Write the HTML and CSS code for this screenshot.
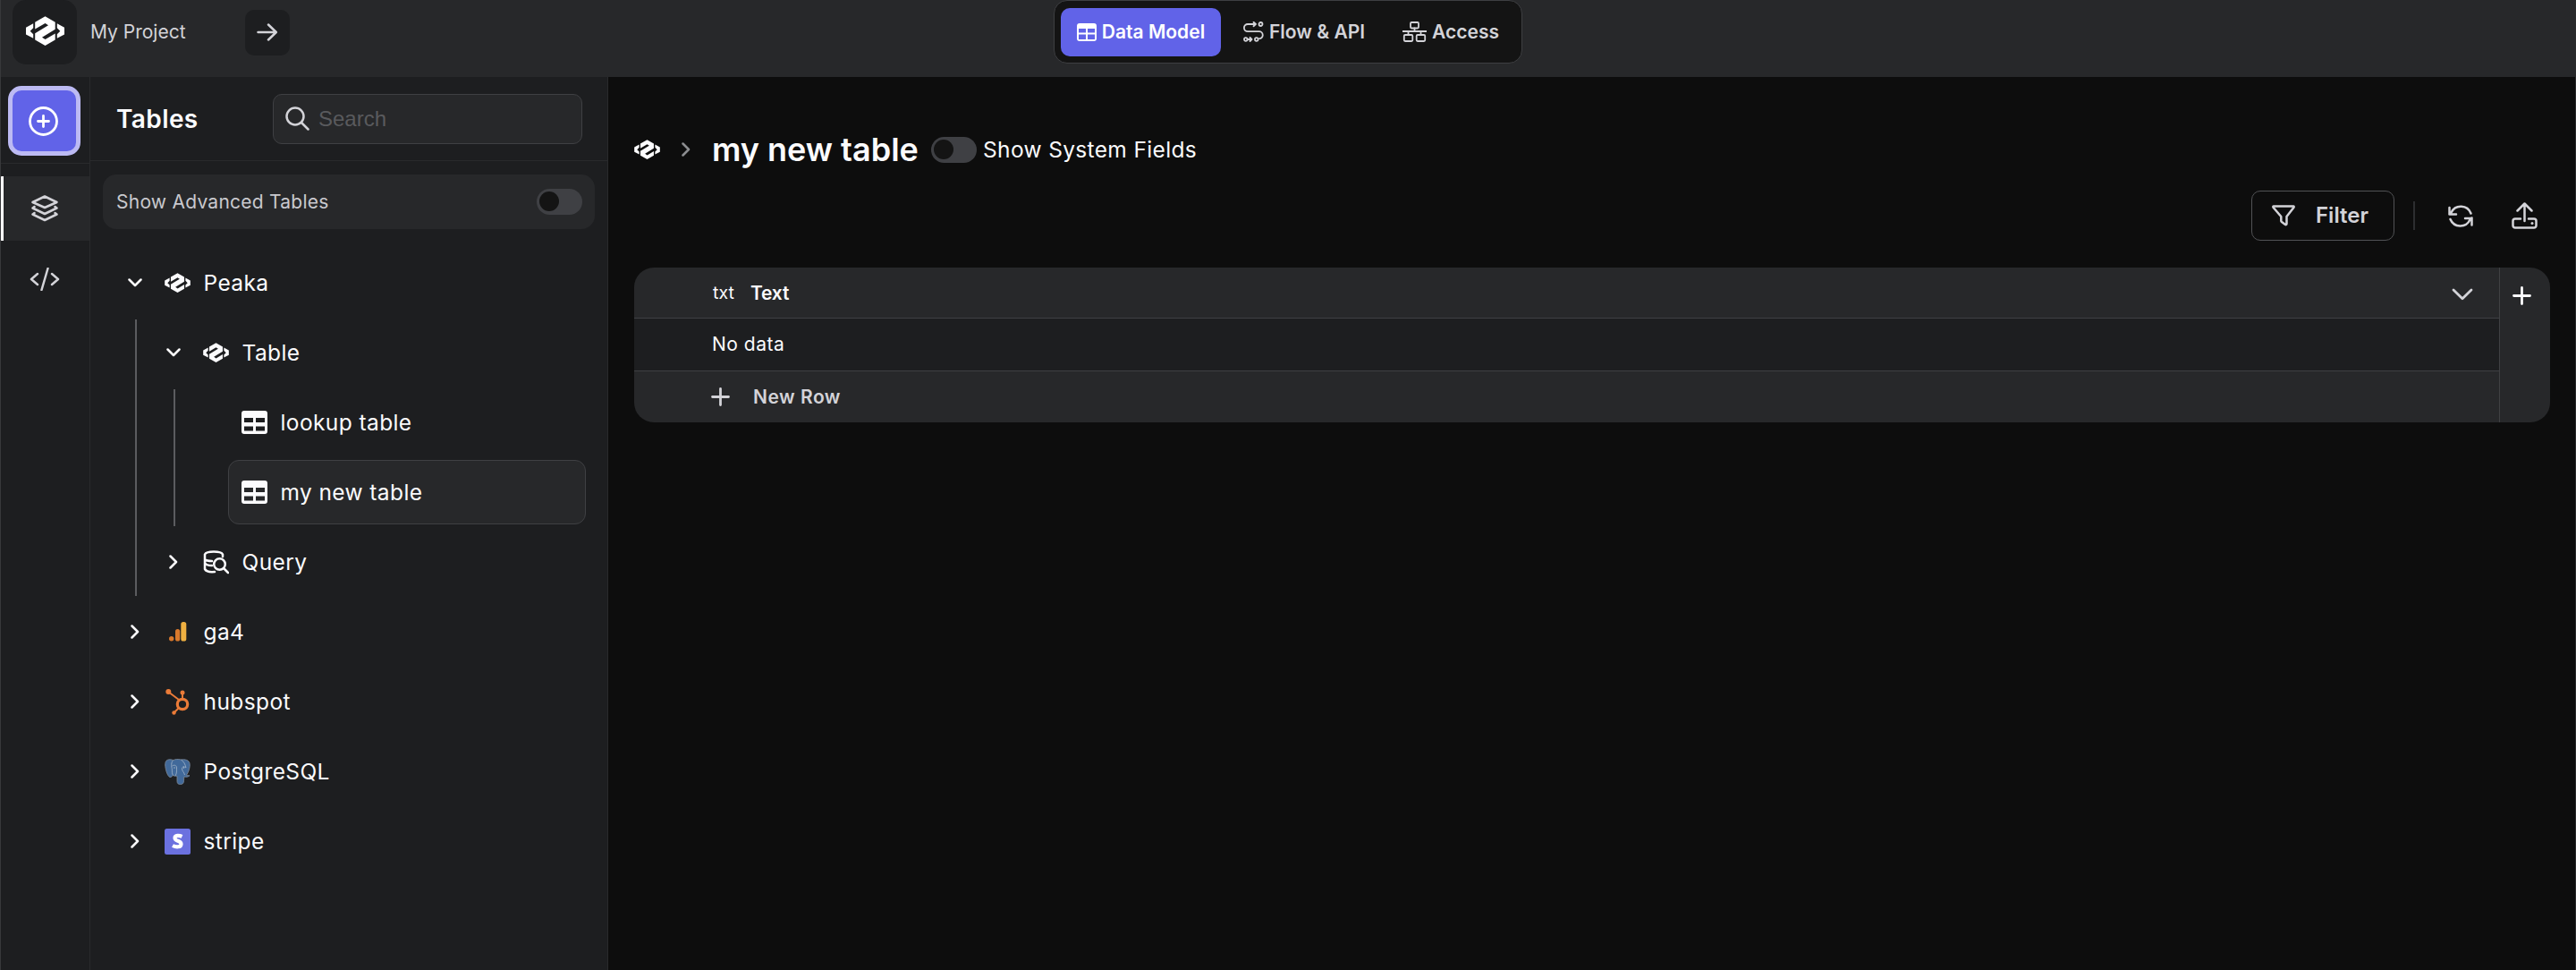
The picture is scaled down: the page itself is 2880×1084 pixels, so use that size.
FILE: index.html
```html
<!DOCTYPE html>
<html lang="en">
<head>
<meta charset="utf-8">
<title>My Project</title>
<link rel="stylesheet" href="styles.css">
</head>
<body>
<svg class="defs" width="0" height="0">
  <symbol id="logo" viewBox="0 0 43 33">
    <path d="M0 12.700 8.200 8.300v4.900L4.700 16.700l3.500 3.600v4.400L0 20.600zM43 12.700 34.800 8.300v4.900l3.500 3.500-3.500 3.600v4.400L43 20.600zM10.200 6.800 21.500.2 32.700 6.800v8L18 23.800l3.600 2.300 11.100-6.600v7L21.500 33 10.200 26.500v-7.300L25 10.200 21.500 8 10.200 14.500z"/>
  </symbol>
  <symbol id="down" viewBox="0 0 16 10"><path class="line" d="M1.500 1.500 8 8l6.500-6.500"/></symbol>
  <symbol id="right" viewBox="0 0 10 16"><path class="line" d="M1.500 1.500 8 8l-6.500 6.500"/></symbol>
  <symbol id="grid" viewBox="0 0 29 26">
    <path fill-rule="evenodd" d="M3 0h23a3 3 0 0 1 3 3v20a3 3 0 0 1-3 3H3a3 3 0 0 1-3-3V3a3 3 0 0 1 3-3zM3 8v5h10V8zM16 8v5h10V8zM3 17.500v5h10v-5zM16 17.500v5h10v-5z"/>
  </symbol>
  <symbol id="plus" viewBox="0 0 21 21"><path class="thick" d="M10.500 1.500v18M1.500 10.500h18"/></symbol>
</svg>

<header class="topbar">
  <div class="project">
    <div class="brand"><svg width="43" height="33"><use href="#logo"/></svg></div>
    <span class="project-name">My Project</span>
    <div class="go"><svg width="24" height="20" viewBox="0 0 24 20"><path class="line" d="M1.500 10h20M13 1.500 21.800 10 13 18.500"/></svg></div>
  </div>
  <nav class="tabs">
    <div class="tab active">
      <svg width="22" height="20" viewBox="0 0 22 20"><path fill-rule="evenodd" d="M3 0h16a3 3 0 0 1 3 3v14a3 3 0 0 1-3 3H3a3 3 0 0 1-3-3V3a3 3 0 0 1 3-3zM2 6v4.500h8V6zM12 6v4.500h8V6zM2 12.500V18h8v-5.500zM12 12.500V18h8v-5.500z"/></svg>
      <span>Data Model</span>
    </div>
    <div class="tab flow">
      <svg width="23" height="23" viewBox="0 0 23 23"><g class="fine"><path d="M14 3H5a4 4 0 0 0 0 8.200h12.500a4 4 0 0 1 .5 8M11.500.8 14 3l-2.500 2.200M4.500 20H9M7.500 18l2 2-2 2"/><circle cx="19.500" cy="3" r="2"/><circle cx="2.800" cy="20" r="1.800"/><circle cx="14.800" cy="20" r="1.800"/></g></svg>
      <span>Flow &amp; API</span>
    </div>
    <div class="tab access">
      <svg width="27" height="23" viewBox="0 0 27 23"><g class="fine"><rect x="9" y="1" width="9" height="6.500" rx="1.200"/><path d="M0 11h27M13.500 7.500V11M6.500 11v4M20.500 11v4"/><rect x="1.800" y="15" width="9.500" height="7" rx="1.200"/><rect x="15.700" y="15" width="9.500" height="7" rx="1.200"/></g></svg>
      <span>Access</span>
    </div>
  </nav>
  <div class="topbar-end"></div>
</header>

<div class="workspace">
  <aside class="rail">
    <div class="rail-add"><div class="add"><svg width="33" height="33" viewBox="0 0 33 33"><g class="thick"><circle cx="16.500" cy="16.500" r="15"/><path d="M16.500 10.500v12M10.500 16.500h12"/></g></svg></div></div>
    <div class="rail-item active"><svg width="30" height="30" viewBox="0 0 30 30"><g class="line"><path d="M15 1.500 28.500 8 15 14 1.500 8zM3.500 13l-2 1.500L15 21l13.500-6.500-2-1.500M3.500 20l-2 1.500L15 28l13.500-6.500-2-1.500"/></g></svg></div>
    <div class="rail-item"><svg width="34" height="26" viewBox="0 0 34 26"><path class="line" d="M9 7 2 13l7 6M25 7l7 6-7 6M20.500 1l-7 24"/></svg></div>
  </aside>

  <section class="panel">
    <div class="panel-head">
      <h2>Tables</h2>
      <div class="search"><svg width="27" height="27" viewBox="0 0 27 27"><g class="line"><circle cx="11" cy="11" r="9.500"/><path d="m18 18 7.500 7.500"/></g></svg><span>Search</span></div>
    </div>
    <div class="advanced"><span>Show Advanced Tables</span><i class="toggle"></i></div>
    <div class="tree">
      <div class="node"><svg class="caret" width="16" height="10"><use href="#down"/></svg><svg class="icon" width="29" height="22"><use href="#logo"/></svg><span>Peaka</span></div>
      <div class="branch">
        <div class="guide"></div>
        <div class="children">
          <div class="node"><svg class="caret" width="16" height="10"><use href="#down"/></svg><svg class="icon" width="29" height="22"><use href="#logo"/></svg><span>Table</span></div>
          <div class="branch">
            <div class="guide"></div>
            <div class="leaves">
              <div class="leaf"><svg width="29" height="26"><use href="#grid"/></svg><span>lookup table</span></div>
              <div class="leaf selected"><svg width="29" height="26"><use href="#grid"/></svg><span>my new table</span></div>
            </div>
          </div>
          <div class="node"><svg class="caret" width="10" height="16"><use href="#right"/></svg><svg class="icon" width="29" height="27" viewBox="0 0 29 27"><g class="line"><path d="M22 7V4.500C20 .5 4 .5 2 4.500V21c1.500 2.500 6 3.500 11 3M2 5v5c1.500 1.500 4 2 8 2M2 14c1 2 3 3 8 3"/><circle cx="18.500" cy="15.500" r="6.300"/><path d="m23.500 20.500 4.500 4.500"/></g></svg><span>Query</span></div>
        </div>
      </div>
      <div class="node"><svg class="caret" width="10" height="16"><use href="#right"/></svg><svg class="icon" width="29" height="22" viewBox="0 0 29 22"><circle cx="7.700" cy="18.800" r="2.700" fill="#d9792c"/><rect x="12" y="8" width="5.200" height="13.500" rx="2.600" fill="#d9792c"/><rect x="18.300" y="0" width="6" height="21.500" rx="2.600" fill="#efb041"/></svg><span>ga4</span></div>
      <div class="node"><svg class="caret" width="10" height="16"><use href="#right"/></svg><svg class="icon" width="29" height="29" viewBox="0 0 29 29"><g fill="none" stroke="#ea7b38" stroke-width="2"><circle cx="20" cy="17" r="5.700" stroke-width="3.200"/><path d="m4 3 12 9M20 4v7M16 21l-5 5"/></g><g fill="#ea7b38"><circle cx="4.300" cy="3" r="3"/><circle cx="20" cy="4" r="2.500"/><circle cx="10.500" cy="26.500" r="2.200"/></g></svg><span>hubspot</span></div>
      <div class="node"><svg class="caret" width="10" height="16"><use href="#right"/></svg><svg class="icon" width="29" height="29" viewBox="0 0 29 29"><path fill="#41699a" stroke="#7d8a99" stroke-width=".8" d="M6 .8C2 .8.600 3 .700 7c.1 4 2.300 12.500 5.300 13.500 1.200.3 2.300-.8 3.300-2 1.400 1 3 .8 4.700.8v6c.2 2.500 1.400 3.200 3.500 3.200 3 0 3.900-1.300 4-4l.3-4.500c2.700.5 4.700.3 6.200-1.300-1.500.2-2.700.1-3.500-.4 2.500-4 4.300-9 3.600-13C27.500 1.500 23 .2 18.500 1 15-.1 11.500.6 9.800 1.500 8.500 1 7.500.8 6 .8z"/><path fill="none" stroke="#a3b5c9" stroke-width=".8" d="M9.800 1.500c-3 2.500-2 7-1.500 10 .3 3-.3 5 1.200 7M8.500 8c2-1.500 5-1 5 2 0 4 .3 6-1.500 9M18.500 1c3 2 4.500 5 5.500 9-2-1.500-4.500-1.500-4.500 1 0 3 2.500 4 3 7M21.500 8.500V11M11 9v2"/></svg><span>PostgreSQL</span></div>
      <div class="node"><svg class="caret" width="10" height="16"><use href="#right"/></svg><svg class="icon" width="29" height="29" viewBox="0 0 29 29"><rect width="29" height="29" rx="2.500" fill="#6b71df"/><path fill="none" stroke="#fff" stroke-width="4.200" d="M19.500 8.800c-3-1.400-8-1.500-8 1.600 0 4 7 2.700 7 6.800 0 4-6 3.600-9.500 1.800"/></svg><span>stripe</span></div>
    </div>
  </section>

  <main class="content">
    <div class="crumbs">
      <svg class="logo" width="29" height="22"><use href="#logo"/></svg>
      <svg class="sep" width="10" height="16"><use href="#right"/></svg>
      <h1>my new table</h1>
      <i class="toggle"></i>
      <span>Show System Fields</span>
    </div>
    <div class="actions">
      <div class="filter"><svg width="26" height="24" viewBox="0 0 26 24"><path class="line" d="M2 1.500h22c.7 0 .8.700.5 1.200L16.500 13v8c0 1-.8 1.400-1.500 1l-4-3c-.5-.4-.7-.7-.7-1.300V13L1.500 2.700C1.200 2.200 1.300 1.500 2 1.500z"/></svg><span>Filter</span></div>
      <div class="divider"></div>
      <svg width="28" height="27" viewBox="0 0 28 27"><g class="line"><path d="M25.500 10.500A12 12 0 0 0 3.500 9.500L1.500 11.500M1.500 4v7.500H9M2.500 17a12 12 0 0 0 22 .5l2-2M26.500 23.500V16H19"/></g></svg>
      <svg width="29" height="30" viewBox="0 0 29 30"><g class="line"><path d="M14.500 21V2M6.500 9.500l8-8 8 8M10 18.500H4a2.500 2.500 0 0 0-2.500 2.500v5A2.500 2.500 0 0 0 4 28.500h21a2.500 2.500 0 0 0 2.500-2.500v-5a2.500 2.500 0 0 0-2.500-2.500h-6"/></g><circle cx="23" cy="23.500" r="1.500"/></svg>
    </div>
    <div class="sheet">
      <div class="rows">
        <div class="row head"><small>txt</small><b>Text</b><svg width="24" height="14" viewBox="0 0 24 14"><path class="thick" d="M2 2l10 9.800L22 2"/></svg></div>
        <div class="row empty"><span>No data</span></div>
        <div class="row new"><svg width="21" height="21"><use href="#plus"/></svg><b>New Row</b></div>
      </div>
      <div class="add-column"><svg width="21" height="21"><use href="#plus"/></svg></div>
    </div>
  </main>
</div>
</body>
</html>
```
FILE: styles.css
```css
* { box-sizing: border-box; }
body {
  margin: 0;
  width: 2880px;
  height: 1084px;
  overflow: hidden;
  display: flex;
  flex-direction: column;
  background: #0d0d0d;
  color: #fbfbfd;
  font: 400 21px/30px Inter, sans-serif;
  border-left: 1px solid #37383a;
  border-right: 1px solid #2a2b2c;
}
svg { display: block; flex: none; fill: currentColor; }
.defs { position: absolute; }
.line, .thick, .fine {
  fill: none;
  stroke: currentColor;
  stroke-width: 2.5;
  stroke-linecap: round;
  stroke-linejoin: round;
}
.thick { stroke-width: 2.8; }
.fine { stroke-width: 1.8; }
span, h1, h2, b, small { white-space: nowrap; }
h1, h2 { margin: 0; font-weight: 600; }
b { font-weight: 600; }

/* Top bar */
.topbar {
  height: 86px;
  flex: none;
  display: grid;
  grid-template-columns: 1fr auto 1fr;
  align-items: start;
  background: #27282a;
  color: #d3d3d8;
}
.project { display: flex; align-items: center; height: 72px; padding-left: 13px; }
.brand {
  width: 72px; height: 72px;
  display: flex; align-items: center; justify-content: center;
  padding-bottom: 3px;
  border-radius: 15px;
  background: #1d1e20;
  color: #fff;
}
.project-name { width: 173px; margin-left: 15px; }
.go {
  width: 50px; height: 51px;
  display: flex; align-items: center; justify-content: center;
  border-radius: 10px;
  background: #1d1e20;
}
.tabs {
  height: 71px;
  width: 524px;
  display: flex;
  align-items: center;
  padding-left: 7px;
  border: 1px solid #3e3f42;
  border-radius: 15px;
  background: #141414;
  font-weight: 600;
}
.tab { height: 54px; display: flex; align-items: center; gap: 6px; }
.tab.active {
  width: 179px;
  justify-content: center;
  border-radius: 10px;
  background: #6163e8;
  color: #fff;
}
.flow { margin-left: 25px; }
.access { margin-left: 42px; }

/* Icon rail */
.workspace { flex: 1; display: flex; min-height: 0; }
.rail {
  width: 100px;
  border-right: 1px solid #292a2c;
  background: #1d1e20;
  color: #d3d3d8;
}
.rail-add {
  height: 97px;
  margin-bottom: 14px;
  padding: 10px 0 0 8px;
  border-bottom: 1px solid #292a2c;
}
.add {
  width: 81px; height: 78px;
  display: flex; align-items: center; justify-content: center;
  padding-right: 2px;
  border: 5px solid #bcbaf3;
  border-radius: 15px;
  background: #6163e8;
  color: #fff;
}
.rail-item { height: 72px; display: flex; align-items: center; justify-content: center; padding-right: 1px; }
.rail-item.active {
  margin-left: -1px;
  padding-right: 4px;
  border-left: 4px solid #fff;
  border-radius: 2px 0 0 2px;
  background: #27282a;
}
.rail-item + .rail-item { margin-top: 7px; }

/* Tables panel */
.panel { width: 579px; border-right: 1px solid #292a2c; background: #1d1e20; }
.panel-head {
  height: 94px;
  display: flex;
  align-items: center;
  justify-content: space-between;
  padding: 0 28px 0 29px;
  border-bottom: 1px solid #292a2c;
}
.panel-head h2 { font-size: 28px; letter-spacing: .4px; }
.search {
  width: 346px; height: 56px;
  display: flex; align-items: center; gap: 10px;
  padding-left: 13px;
  border: 1px solid #3f4043;
  border-radius: 10px;
  background: #27282a;
  color: #d3d3d8;
}
.search span { color: #595a5d; font: 24px "Liberation Sans", sans-serif; }
.advanced {
  height: 61px;
  display: flex; align-items: center; justify-content: space-between;
  margin: 15px 14px 21px;
  padding: 0 14px 0 15px;
  border-radius: 15px;
  background: #27282a;
  color: #c9c9ce;
  letter-spacing: .25px;
}
.toggle {
  display: block;
  width: 51px; height: 29px;
  padding: 3px;
  border-radius: 15px;
  background: #3f4044;
}
.toggle::before { content: ""; display: block; width: 22px; height: 22px; border-radius: 50%; background: #141414; }
.tree { font-size: 24.5px; letter-spacing: .4px; padding-left: 41px; }
.node { height: 78px; display: flex; align-items: center; }
.caret { width: 18px; }
.icon { margin: 0 14.5px 0 24px; }
.branch { display: flex; }
.guide { width: 2px; margin: 2px 0 1px 9px; background: #5b5c5f; }
.children { flex: 1; padding-left: 32px; }
.leaves { flex: 1; padding: 0 24px 0 59px; }
.leaf {
  height: 72px;
  margin: 3px 0;
  display: flex; align-items: center; gap: 14.5px;
  padding-left: 14px;
  border: 1px solid transparent;
  border-radius: 12px;
}
.leaf + .leaf { margin-top: 6px; }
.leaf.selected { border-color: #3f4043; background: #27282a; }

/* Main area */
.content { flex: 1; padding: 53px 28px 0 29px; }
.crumbs { height: 56px; display: flex; align-items: center; }
.sep { margin: 0 24px; color: #8c8d90; }
.crumbs h1 { width: 245px; font-size: 36px; line-height: 50px; }
.crumbs span { margin-left: 7px; font-size: 24.5px; letter-spacing: .35px; }
.actions {
  height: 56px;
  display: flex; align-items: center; justify-content: flex-end;
  margin: 18px 14px 30px 0;
  color: #d3d3d8;
}
.filter {
  width: 160px; height: 56px;
  display: flex; align-items: center; gap: 23px;
  padding-left: 22px;
  border: 1px solid #515255;
  border-radius: 10px;
  font-size: 24px;
  font-weight: 600;
}
.divider { width: 2px; height: 32px; margin: 0 37px 0 21px; background: #2d2e30; }
.actions > svg + svg { margin-left: 43px; }
.sheet {
  height: 173px;
  display: flex;
  overflow: hidden;
  border-radius: 22px;
  background: #27282a;
}
.rows { flex: 1; }
.row { display: flex; align-items: center; padding-left: 87px; }
.head { height: 57px; border-bottom: 1px solid #3f4043; padding-right: 29px; }
.head small { width: 42px; margin-left: 1px; font-size: 19.5px; }
.head b { flex: 1; padding-top: 1px; letter-spacing: -.2px; }
.head svg { color: #d3d3d8; margin-top: 4px; }
.empty { height: 59px; border-bottom: 1px solid #3f4043; background: #1d1e20; letter-spacing: .5px; }
.new { height: 57px; gap: 25px; padding-left: 86px; color: #d3d3d8; letter-spacing: .5px; }
.new b { padding-left: 1px; }
.add-column { width: 57px; border-left: 1px solid #3f4043; padding: 21px 0 0 14px; }
```
